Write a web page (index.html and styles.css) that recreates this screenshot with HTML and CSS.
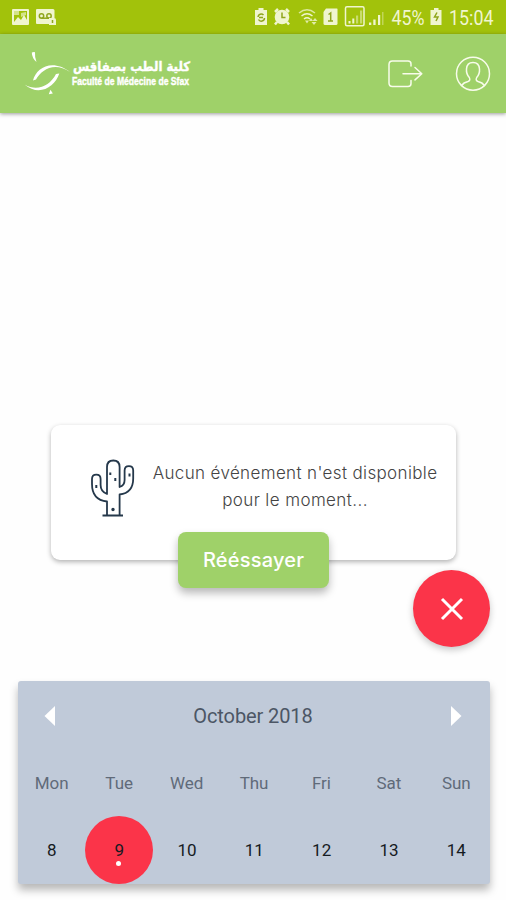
FILE: index.html
```html
<!DOCTYPE html>
<html lang="fr">
<head>
<meta charset="utf-8">
<title>Faculté de Médecine de Sfax</title>
<link rel="stylesheet" href="styles.css">
</head>
<body>
<div class="status">
  <svg class="status-left" width="60" height="34" viewBox="0 0 60 34">
    <path fill-rule="evenodd" d="M13 9h15q1 0 1 1v14q0 1-1 1H13q-1 0-1-1V10q0-1 1-1zm1 2v11l4-5 3 3 3-5 3 5V11z"/>
    <path d="M14 11h5v4h-5zM21 13l5-1v3l-5 2z" opacity=".65"/>
    <path d="M37 9h16q1.500 0 1.500 1.500V18h-4v6H37q-1 0-1-1V10q0-1 1-1z"/>
    <g class="cut"><circle cx="41.500" cy="16" r="2.200"/><circle cx="49" cy="16" r="2.200"/><path d="M41.500 18.200H49"/></g>
    <path d="M49 18h5q2 0 2 2v5h-7z"/><path class="cut" d="M52.500 20v3"/>
  </svg>
  <svg class="status-right" width="256" height="34" viewBox="250 0 256 34">
    <path d="M258.500 8h5v2h3.500v15h-12V10h3.500z"/>
    <path class="cut" d="M258 17a3.200 3.200 0 0 1 5.500-2M264.500 18a3.200 3.200 0 0 1-6 1.500M259 17.500h4"/>
    <circle cx="282" cy="17" r="7.300"/><path class="line bold" d="M275 12l3-3M286 9l3 3M277 22l-2 2.500M287 22l2 2.500"/>
    <path class="cut" d="M282 12.500v5h3.500"/>
    <g class="line"><path d="M299 13q8-6.500 16 0" opacity=".75"/><path d="M301.500 16q5.500-4.500 11 0"/><path d="M304 19q3-2.500 6 0"/></g>
    <path d="M305 20.500h4l-2 3zM311 18l2 3h-4zM315 18l2.500 3h-5zM314 25l-2.500-3h5z" opacity=".8"/>
    <path d="M326 8.500h11q.5 0 .5 1v14q0 1.500-1.500 1.500h-11q-1.500 0-1.500-1.500V12z"/>
    <path class="cut" d="M328.500 14.500l2.200-1.500v8M328 21h5"/>
    <rect class="line" x="345.500" y="6.800" width="18.500" height="19" rx="1.500"/>
    <path d="M348.500 21h2v2.500h-2zM352.300 18.500h2v5h-2z"/><path d="M356 15.500h2.200v8H356zM360 10.500h2.200v13H360z" opacity=".5"/>
    <path d="M369 22.500h2.300V25H369zM373.300 19.500h2.300V25h-2.300zM378 15h2.200v10H378z"/><path d="M382 12h1.500v13H382z" opacity=".4"/>
    <text x="391.500" y="24.800" textLength="33" lengthAdjust="spacingAndGlyphs">45%</text>
    <path d="M434 8h4.500v2h3v15h-11V10h3.500z"/><path class="cut" d="M437 12.500l-2.500 4.500h3.500l-2 4"/>
    <text x="449" y="24.800" textLength="44.500" lengthAdjust="spacingAndGlyphs">15:04</text>
  </svg>
</div>
<header class="header">
  <svg class="logo" width="240" height="55" viewBox="20 45 240 55">
    <path d="M31.800 52.500q2-.9 3.200-.3-.4 5 1.500 9.800-4.500-3.600-4.700-9.500z"/>
    <path d="M33 80.500C36 68 52 58 70 72 54 61 41 70.500 36 79.500z"/>
    <path d="M24.500 84.500c13 7.500 25.500 1 31.500-10.500l3.300-.5C55 87 39 97 24.500 84.500z"/>
    <path d="M50.500 89.800l2.300 3.600-4 .8z"/>
    <text class="logo-ar" x="190" y="71" direction="rtl" textLength="117" lengthAdjust="spacingAndGlyphs">كلية الطب بصفاقس</text>
    <text class="logo-fr" x="72" y="85" textLength="117" lengthAdjust="spacingAndGlyphs">Faculté de Médecine de Sfax</text>
  </svg>
  <nav class="actions">
    <svg width="36" height="30" viewBox="387 59 36 30"><path d="M411 66v-2q0-3-3-3h-15.500q-3.500 0-3.500 3.500v18.500q0 3.500 3.500 3.500H408q3 0 3-3v-3M403 73.700h18.500M415 67.500l6.800 6.200-6.800 6.200"/></svg>
    <svg width="36" height="36" viewBox="455 56 36 36"><circle cx="473" cy="73.700" r="16.500"/><path d="M461.500 85.500q2-3 6.500-4 2.800-1 1.300-4-3.200-3.500-2.800-8.500.4-6.500 6.500-6.500t6.500 6.500q.4 5-2.800 8.500-1.500 3 1.300 4 4.500 1 6.500 4"/></svg>
  </nav>
</header>
<main class="content">
  <section class="notice">
    <svg class="cactus" width="46" height="60" viewBox="90 457 46 60">
      <path d="M107 514V500.500Q92 499 92 483v-5q0-4.300 4.300-4.300t4.300 4.300v6q0 6.500 6.400 9V466q0-6.500 6.300-6.500t6.300 6.500v20q5-1.500 5-7v-9.500q0-4.300 4.300-4.300t4.300 4.300v8q0 14.500-13.600 16V514M102.500 514.500h20.500"/>
      <path class="spines" d="M96.300 484v3M110.300 471.500v2.500M115.300 477v3M129.500 472.500v3"/><circle cx="113" cy="508.500" r=".8"/>
    </svg>
    <p class="message"><span class="line-one">Aucun événement n'est disponible</span><span class="line-two">pour le moment...</span></p>
    <button class="retry"><span>Rééssayer</span></button>
  </section>
  <button class="fab" aria-label="Fermer"><svg width="24" height="24" viewBox="0 0 24 24"><path d="M2 2l20 20M22 2L2 22"/></svg></button>
  <section class="calendar">
    <div class="month">
      <svg width="12" height="22" viewBox="0 0 12 22"><path d="M11 1v20L.5 11z"/></svg>
      <h1>October 2018</h1>
      <svg width="12" height="22" viewBox="0 0 12 22"><path d="M1 1v20l10.500-10z"/></svg>
    </div>
    <div class="week names"><span>Mon</span><span>Tue</span><span>Wed</span><span>Thu</span><span>Fri</span><span>Sat</span><span>Sun</span></div>
    <div class="week days"><span>8</span><span class="selected">9</span><span>10</span><span>11</span><span>12</span><span>13</span><span>14</span></div>
  </section>
</main>
</body>
</html>
```
FILE: styles.css
```css
* { box-sizing: border-box; }
body { margin: 0; width: 506px; height: 900px; overflow: hidden; background: #fefefe; font-family: Roboto, sans-serif; }
svg { display: block; flex: none; overflow: visible; }
button { border: 0; padding: 0; color: #fff; font-family: inherit; }

.status { height: 34px; display: flex; justify-content: space-between; background: #a2c20b; }
.status svg { fill: #f0f5cf; }
.status text { font: 400 21px Roboto, sans-serif; }
.status .line { fill: none; stroke: #f0f5cf; stroke-width: 1.5; }
.status .bold { stroke-width: 2.5; }
.status .cut { fill: none; stroke: #8fa51b; stroke-width: 1.5; }

.header { height: 79px; padding: 11px 15px 0 20px; display: flex; justify-content: space-between; align-items: flex-start; background: #9fd169; box-shadow: 0 1px 4px rgba(0,0,0,.4); }
.logo { fill: #fff; }
.logo-ar { font: 700 13px "DejaVu Sans", sans-serif; stroke: #fff; stroke-width: .4; }
.logo-fr { font: 700 10px "Liberation Sans", sans-serif; stroke: #fff; stroke-width: .4; }
.actions { display: flex; align-items: center; gap: 32px; height: 57px; }
.actions svg { fill: none; stroke: #f8fceb; stroke-width: 1.5; stroke-linecap: round; stroke-linejoin: round; }

.content { padding-top: 312px; display: flex; flex-direction: column; }
.notice { position: relative; width: 405px; height: 135px; margin-left: 51px; padding: 33px 19px 0 39px; display: flex; justify-content: space-between; align-items: flex-start; background: #fff; border-radius: 9px; box-shadow: 0 2px 5px rgba(0,0,0,.3); }
.cactus { fill: none; stroke: #25384b; stroke-width: 1.8; stroke-linejoin: round; }
.cactus .spines { stroke-width: 2; }
.message { width: 284px; margin: 2px 0 0; display: flex; flex-direction: column; align-items: center; font: 300 17px/27px Inter, sans-serif; color: #444; white-space: nowrap; }
.line-one { letter-spacing: .36px; }
.line-two { letter-spacing: .4px; }
.retry { position: absolute; left: 127px; top: 107px; width: 151px; height: 56px; border-radius: 8px; background: #9fd169; box-shadow: 0 5px 9px rgba(0,0,0,.28); font: 500 20px/54px Inter, sans-serif; letter-spacing: .2px; }
.fab { align-self: flex-end; width: 77px; height: 77px; margin: 10px 16px 0 0; border-radius: 50%; display: flex; align-items: center; justify-content: center; background: #fb3449; box-shadow: 0 3px 7px rgba(0,0,0,.22); }
.fab svg { fill: none; stroke: #fff; stroke-width: 3; }

.calendar { width: 472px; height: 203px; margin: 34px 0 0 18px; border-radius: 3px; background: #c0cad9; box-shadow: 0 6px 9px rgba(0,0,0,.28); }
.month { height: 69px; padding: 0 28px 0 26px; display: flex; align-items: center; justify-content: space-between; }
.month svg { fill: #fff; }
.month h1 { margin: 0; font-size: 20px; font-weight: 400; letter-spacing: -.1px; color: #4c5665; }
.week { display: grid; grid-template-columns: repeat(7, 1fr); align-items: center; text-align: center; }
.names { height: 66px; font-size: 17px; color: #606a79; letter-spacing: -.05px; }
.days { height: 68px; font-size: 17px; line-height: 68px; color: #151a22; }
.selected { position: relative; justify-self: center; width: 68px; height: 68px; border-radius: 50%; background: #fb3449; }
.selected::after { content: ""; position: absolute; left: 31px; top: 45px; width: 5px; height: 5px; border-radius: 50%; background: #fff; }
```
